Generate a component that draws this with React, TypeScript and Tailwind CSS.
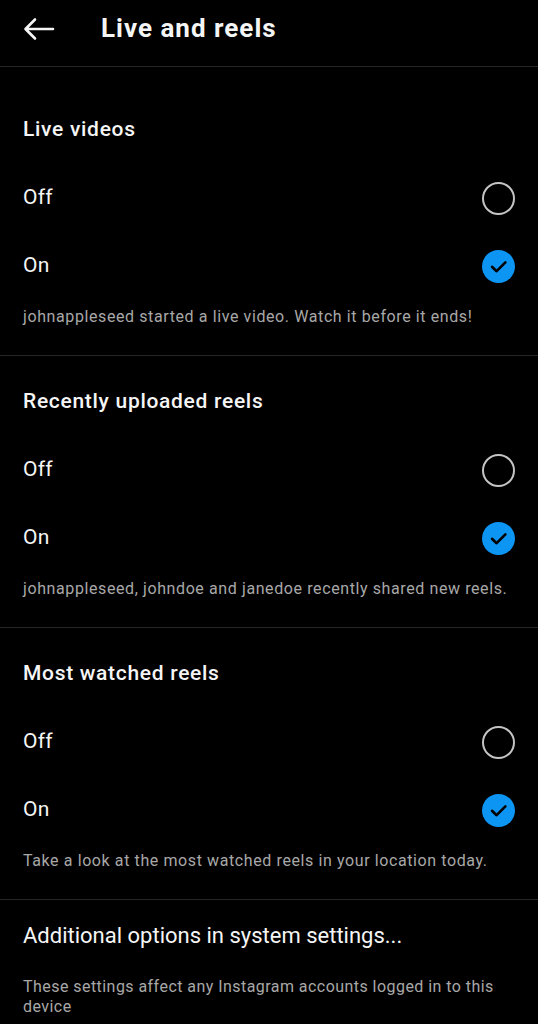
import React from "react";

const font = { fontFamily: "Roboto, 'Noto Sans', sans-serif" };

function Radio() {
  return <div className="w-[33px] h-[33px] rounded-full border-[2.5px] border-[#c4c4c4]" />;
}

function Checked() {
  return (
    <div className="w-[33px] h-[33px] rounded-full bg-[#0d95f4] flex items-center justify-center">
      <svg width="33" height="33" viewBox="0 0 33 33" fill="none">
        <path d="M10 16.8 L14.6 21.2 L23.4 12.4" stroke="#000" strokeWidth="2.6" strokeLinecap="round" strokeLinejoin="round" />
      </svg>
    </div>
  );
}

function Section({ title, desc, first }: { title: string; desc: string; first?: boolean }) {
  return (
    <div className={`${first ? "pt-[48px]" : "pt-[31px]"} pb-[28px] border-b border-[#262626] px-[23px]`}>
      <div className="h-[28px] leading-[28px] text-[21px] tracking-[0.7px] font-medium text-[#f5f5f5]">{title}</div>
      <div className="mt-[21px]">
        <div className="h-[68px] flex items-center justify-between">
          <span className="text-[21px] tracking-[0.3px] text-[#f5f5f5]">Off</span>
          <Radio />
        </div>
        <div className="h-[68px] flex items-center justify-between">
          <span className="text-[21px] tracking-[0.3px] text-[#f5f5f5]">On</span>
          <Checked />
        </div>
      </div>
      <div className="mt-[7px] h-[20px] leading-[20px] text-[16px] tracking-[0.6px] text-[#a8a8a8]">{desc}</div>
    </div>
  );
}

export default function App() {
  return (
    <div className="w-[538px] min-h-[1024px] bg-black text-white overflow-hidden" style={font}>
      <div className="h-[67px] border-b border-[#262626]">
        <div className="h-[57px] flex items-center">
          <div className="w-[101px] pl-[23px]">
            <svg width="32" height="24" viewBox="0 0 32 24" fill="none">
              <path d="M30 12 H3 M12 2.5 L2.5 12 L12 21.5" stroke="#f5f5f5" strokeWidth="2.6" strokeLinecap="round" strokeLinejoin="round" />
            </svg>
          </div>
          <div className="text-[26px] tracking-[1px] font-bold text-[#f5f5f5]">Live and reels</div>
        </div>
      </div>
      <Section first title="Live videos" desc="johnappleseed started a live video. Watch it before it ends!" />
      <Section title="Recently uploaded reels" desc="johnappleseed, johndoe and janedoe recently shared new reels." />
      <Section title="Most watched reels" desc="Take a look at the most watched reels in your location today." />
      <div className="px-[23px] pt-[21px]">
        <div className="h-[30px] leading-[30px] text-[22px] text-[#f5f5f5]">Additional options in system settings...</div>
        <div className="mt-[26px] text-[16px] leading-[20px] tracking-[0.45px] text-[#a8a8a8]">
          These settings affect any Instagram accounts logged in to this device
        </div>
      </div>
    </div>
  );
}
